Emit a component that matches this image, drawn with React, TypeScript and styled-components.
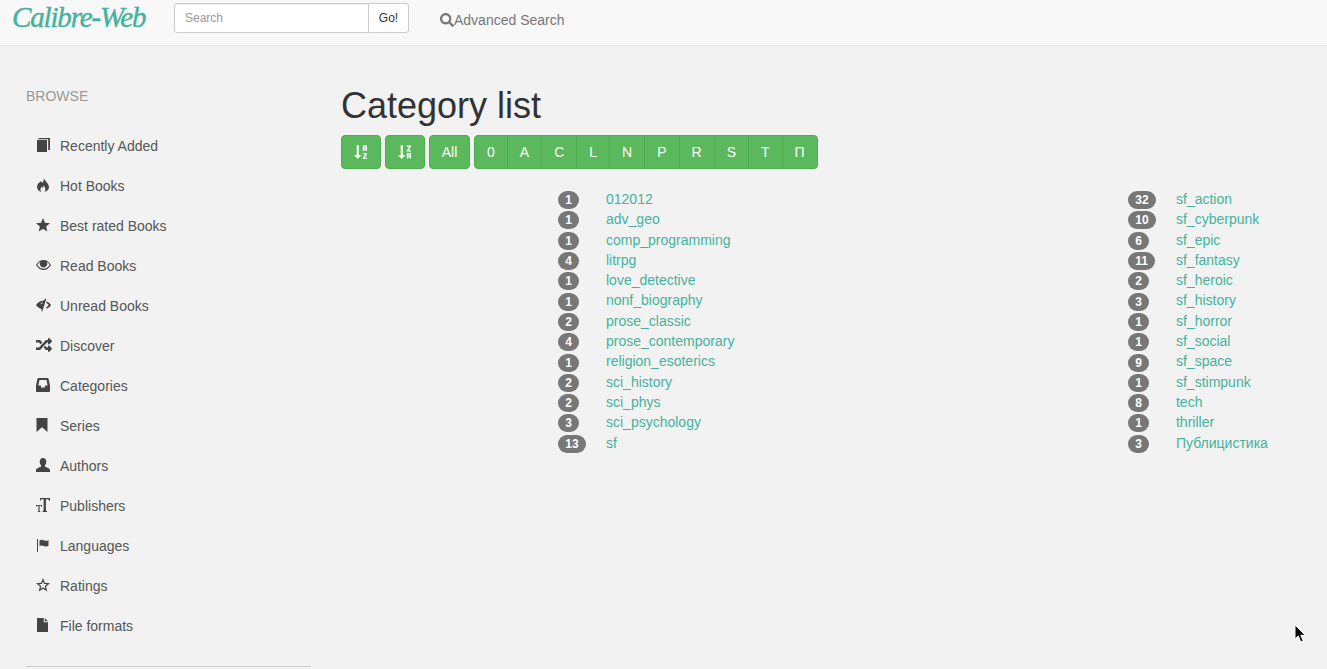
import React from 'react';
import styled, { createGlobalStyle } from 'styled-components';
import { FaRandom, FaSearch } from 'react-icons/fa';

const GlobalStyle = createGlobalStyle`
  html, body {
    margin: 0;
    height: 100%;
    overflow: hidden;
  }
  body {
    background: #f2f2f2;
    color: #333;
    font-family: "Liberation Sans", Arial, sans-serif;
    font-size: 14px;
    line-height: 20px;
  }
  * { box-sizing: border-box; }
`;

const BookIcon = () => (
  <svg width="14" height="14" viewBox="0 0 14 14" fill="currentColor">
    <path d="M1 2h10v12H1z" />
    <path d="M2.500 0H14v12h-1.800V1.300H2.500z" />
  </svg>
);

const FireIcon = () => (
  <svg width="14" height="14" viewBox="0 0 14 14" fill="currentColor">
    <path d="M7.500 0c.8 2.200-.3 3.700-1.300 4.900-.6-.5-.9-1.200-.9-2C2.800 4.300 1 6.300 1 9c0 2.600 2 4.500 4.500 5-.9-.9-1.200-1.900-1-3 .2-1 .8-1.800 1.300-2.600.3.900.7 1.500 1.300 1.700-.1-1.100.1-2 .8-2.800.2 1.400 1.500 2.500 1.500 4.200 0 1-.4 1.900-1.200 2.500C10.900 13.500 13 11.500 13 9 13 6 10 4 7.500 0z" />
  </svg>
);

const StarIcon = () => (
  <svg width="14" height="14" viewBox="0 0 14 14" fill="currentColor">
    <path d="M7 0l1.900 4.800 5.100.4-3.900 3.300 1.200 5L7 10.800l-4.300 2.700 1.200-5L0 5.200l5.100-.4z" />
  </svg>
);

const StarEmptyIcon = () => (
  <svg width="14" height="14" viewBox="0 0 14 14" fill="currentColor">
    <path
      fillRule="evenodd"
      d="M7 0l1.900 4.800 5.100.4-3.900 3.300 1.200 5L7 10.800l-4.300 2.700 1.200-5L0 5.200l5.100-.4zM7 3.200 5.900 5.900l-2.900.2 2.200 1.900-.7 2.800L7 9.300l2.500 1.500-.7-2.800L11 6.100l-2.900-.2z"
    />
  </svg>
);

const EyeOpenIcon = () => (
  <svg width="15" height="14" viewBox="0 0 15 14" fill="currentColor">
    <path
      fillRule="evenodd"
      d="M7.500 2c3 0 5.700 1.900 7.500 5-1.800 3.100-4.500 5-7.500 5S1.800 10.100 0 7c1.800-3.100 4.500-5 7.500-5zM4.400 3.700C3.100 4.400 2.100 5.500 1.300 7c1.500 2.400 3.700 3.800 6.200 3.800s4.700-1.400 6.200-3.800c-.8-1.500-1.800-2.600-3.100-3.300.4.600.7 1.300.7 2.100 0 2-1.700 3.700-3.800 3.700S3.700 7.800 3.700 5.800c0-.8.300-1.500.7-2.100z"
    />
    <path d="M6 3.500a1.300 1.300 0 0 1 1.300 1.300A1.300 1.300 0 0 1 6 6.100 3 3 0 0 0 9.500 5.600 3 3 0 0 0 6 3.500z" />
  </svg>
);

const EyeCloseIcon = () => (
  <svg width="15" height="14" viewBox="0 0 15 14" fill="currentColor">
    <path
      fillRule="evenodd"
      d="M9.200.5l1 .6L6.300 13.500l-1-.5.500-1.700C3.400 10.500 1.300 9 0 7c1.700-2.600 4.500-4.300 7.800-4.500zM6.700 4.200C5.600 4.500 4.800 5.200 4.500 6.200 5.300 5.800 6 5.600 6.400 5.600z"
    />
    <path d="M10.800 3.500l1.100.4C13.100 4.600 14.200 5.700 15 7c-1 1.600-2.400 2.900-4.200 3.700l-.6-1.500C11.200 8.800 12.100 8 12.700 7c-.7-.9-1.600-1.700-2.600-2.200z" />
  </svg>
);

const InboxIcon = () => (
  <svg width="14" height="14" viewBox="0 0 14 14" fill="currentColor">
    <path
      fillRule="evenodd"
      d="M2.500 0h9c.6 0 1 .4 1.100 1L14 7.500V13c0 .6-.4 1-1 1H1c-.6 0-1-.4-1-1V7.500L1.400 1c.1-.6.500-1 1.100-1zM3.500 2 2.400 7.500H5v2h4v-2h2.600L10.500 2z"
    />
  </svg>
);

const BookmarkIcon = () => (
  <svg width="12" height="14" viewBox="0 0 12 14" fill="currentColor">
    <path d="M.5 0h11v14L6 9.300.5 14z" />
  </svg>
);

const UserIcon = () => (
  <svg width="14" height="14" viewBox="0 0 14 14" fill="currentColor">
    <path d="M7 0c2 0 3.300 1.500 3.300 3.600 0 1.500-.5 2.900-1.300 3.900v1.200c1.800.8 5 1.300 5 3.500V14H0v-1.800c0-2.200 3.200-2.700 5-3.500V7.500C4.200 6.500 3.700 5.100 3.700 3.600 3.700 1.500 5 0 7 0z" />
  </svg>
);

const TextSizeIcon = () => (
  <svg width="14" height="14" viewBox="0 0 14 14" fill="currentColor">
    <path d="M4 0h10v3h-.8c-.1-1-.5-1.700-1.500-1.700H9.900v11c0 .5.400.7 1.100.7v1H6.500v-1c.7 0 1.100-.2 1.100-.7v-11H5.800c-.9 0-1.300.7-1.400 1.700H4z" />
    <path d="M0 7h6v1.700h-.6c0-.5-.3-.9-.9-.9h-.9v5.500h.7V14H1.700v-.7h.7V7.800h-.9c-.6 0-.9.400-.9.900H0z" />
  </svg>
);

const FlagIcon = () => (
  <svg width="14" height="14" viewBox="0 0 14 14" fill="currentColor">
    <path d="M1 1h1v13H1z" />
    <path d="M3.500 2.500c1.500-1.200 3-.8 4.300-.2 1.600.7 3 .8 4.700-.3v5.800c-1.700 1-3.200.9-4.700.2-1.400-.6-2.800-.9-4.300.2z" />
  </svg>
);

const FileIcon = () => (
  <svg width="14" height="14" viewBox="0 0 14 14" fill="currentColor">
    <path d="M1 0h6.700v4.300H12V14H1z" />
    <path d="M8.700 0 12 3.300H8.700z" />
  </svg>
);

const SortAlphaIcon = ({ flipped }: { flipped?: boolean }) => (
  <svg width="14" height="14" viewBox="0 0 14 14" fill="currentColor">
    <path d="M2.700 0h2.100v10h2.700L3.700 14 0 10h2.700z" />
    <path
      fillRule="evenodd"
      d="M8.800 .5h4.200v5.500h-1.500V4.200h-1.200V6H8.800zM10.300 1.700v1.300h1.200V1.700z"
      transform={flipped ? 'translate(0 7.500)' : undefined}
    />
    <path
      d="M8.800 8h4.200v1.300l-2.500 3.400H13V14H8.800v-1.300l2.500-3.400H8.800z"
      transform={flipped ? 'translate(0 -7.500)' : undefined}
    />
  </svg>
);

const CursorIcon = () => (
  <svg width="14" height="20" viewBox="0 0 14 20">
    <path
      d="M1 1v14l3.300-3 2.500 6 2.500-1-2.500-5.700h4.500z"
      fill="#000"
      stroke="#fff"
      strokeWidth="1"
    />
  </svg>
);

const navItems: { label: string; icon: React.ReactNode }[] = [
  { label: 'Recently Added', icon: <BookIcon /> },
  { label: 'Hot Books', icon: <FireIcon /> },
  { label: 'Best rated Books', icon: <StarIcon /> },
  { label: 'Read Books', icon: <EyeOpenIcon /> },
  { label: 'Unread Books', icon: <EyeCloseIcon /> },
  { label: 'Discover', icon: <FaRandom size={16} /> },
  { label: 'Categories', icon: <InboxIcon /> },
  { label: 'Series', icon: <BookmarkIcon /> },
  { label: 'Authors', icon: <UserIcon /> },
  { label: 'Publishers', icon: <TextSizeIcon /> },
  { label: 'Languages', icon: <FlagIcon /> },
  { label: 'Ratings', icon: <StarEmptyIcon /> },
  { label: 'File formats', icon: <FileIcon /> },
];

const letters = ['0', 'A', 'C', 'L', 'N', 'P', 'R', 'S', 'T', 'П'];

type Category = [number, string];

const leftColumn: Category[] = [
  [1, '012012'],
  [1, 'adv_geo'],
  [1, 'comp_programming'],
  [4, 'litrpg'],
  [1, 'love_detective'],
  [1, 'nonf_biography'],
  [2, 'prose_classic'],
  [4, 'prose_contemporary'],
  [1, 'religion_esoterics'],
  [2, 'sci_history'],
  [2, 'sci_phys'],
  [3, 'sci_psychology'],
  [13, 'sf'],
];

const rightColumn: Category[] = [
  [32, 'sf_action'],
  [10, 'sf_cyberpunk'],
  [6, 'sf_epic'],
  [11, 'sf_fantasy'],
  [2, 'sf_heroic'],
  [3, 'sf_history'],
  [1, 'sf_horror'],
  [1, 'sf_social'],
  [9, 'sf_space'],
  [1, 'sf_stimpunk'],
  [8, 'tech'],
  [1, 'thriller'],
  [3, 'Публицистика'],
];

const App = () => (
  <>
    <GlobalStyle />
    <Navbar>
      <Logo>Calibre-Web</Logo>
      <SearchForm>
        <SearchInput placeholder="Search" />
        <GoButton>Go!</GoButton>
      </SearchForm>
      <AdvancedLink>
        <FaSearch size={14} />
        Advanced Search
      </AdvancedLink>
    </Navbar>
    <Page>
      <Sidebar>
        <SidebarHeading>BROWSE</SidebarHeading>
        <NavList>
          {navItems.map(item => (
            <NavItem key={item.label}>
              <NavIcon>{item.icon}</NavIcon>
              {item.label}
            </NavItem>
          ))}
        </NavList>
        <Divider />
      </Sidebar>
      <Main>
        <Title>Category list</Title>
        <Filters>
          <GreenButton>
            <SortAlphaIcon />
          </GreenButton>
          <GreenButton>
            <SortAlphaIcon flipped />
          </GreenButton>
          <AllButton>All</AllButton>
          <ButtonGroup>
            {letters.map(letter => (
              <GroupButton key={letter}>{letter}</GroupButton>
            ))}
          </ButtonGroup>
        </Filters>
        <Columns>
          {[leftColumn, rightColumn].map((column, index) => (
            <div key={index}>
              {column.map(([count, name]) => (
                <Row key={name}>
                  <BadgeCell>
                    <Badge>{count}</Badge>
                  </BadgeCell>
                  <CategoryLink>{name}</CategoryLink>
                </Row>
              ))}
            </div>
          ))}
        </Columns>
      </Main>
    </Page>
    <Cursor>
      <CursorIcon />
    </Cursor>
  </>
);

const Navbar = styled.header`
  display: flex;
  align-items: flex-start;
  height: 46px;
  background: #f8f8f8;
  border-bottom: 1px solid #e7e7e7;
`;

const Logo = styled.div`
  flex: none;
  width: 174px;
  padding-left: 12px;
  color: #45b29d;
  font-family: "Liberation Serif", serif;
  font-style: italic;
  font-size: 29px;
  line-height: 35px;
  letter-spacing: -1.15px;
  white-space: nowrap;
  -webkit-text-stroke: 0.4px #45b29d;
`;

const SearchForm = styled.div`
  display: flex;
  width: 235px;
  margin-top: 3px;
`;

const SearchInput = styled.input`
  width: 195px;
  height: 30px;
  padding: 5px 10px;
  border: 1px solid #ccc;
  border-radius: 3px 0 0 3px;
  background: #fff;
  font-family: inherit;
  font-size: 12px;
  box-shadow: inset 0 1px 1px rgba(0, 0, 0, 0.075);
  outline: none;

  &::placeholder {
    color: #999;
    opacity: 1;
  }
`;

const GoButton = styled.button`
  width: 41px;
  height: 30px;
  margin-left: -1px;
  padding: 0;
  border: 1px solid #ccc;
  border-radius: 0 3px 3px 0;
  background: #fff;
  color: #333;
  font-family: inherit;
  font-size: 12px;
`;

const AdvancedLink = styled.a`
  display: flex;
  align-items: center;
  margin: 10px 0 0 31px;
  color: #777;
  line-height: 20px;

  svg {
    flex: none;
  }
`;

const Page = styled.div`
  display: flex;
  align-items: flex-start;
`;

const Sidebar = styled.aside`
  flex: none;
  width: 285px;
  margin-left: 26px;
  padding-top: 40px;
`;

const SidebarHeading = styled.div`
  height: 20px;
  color: #999;
  line-height: 20px;
`;

const NavList = styled.nav`
  margin-top: 20px;
`;

const NavItem = styled.a`
  display: flex;
  align-items: center;
  height: 40px;
  padding-left: 10px;
  color: #555;
`;

const NavIcon = styled.span`
  display: flex;
  flex: none;
  justify-content: flex-start;
  width: 24px;
  margin-top: -3px;
  color: #444;
`;

const Divider = styled.hr`
  margin: 20px 0 0;
  border: 0;
  border-top: 1px solid #ccc;
`;

const Main = styled.main`
  flex: 1;
  min-width: 0;
  margin-left: 30px;
  padding-top: 40px;
`;

const Title = styled.h1`
  margin: 0 0 9.25px;
  color: #333;
  font-size: 36px;
  font-weight: 500;
  line-height: 39.6px;
`;

const Filters = styled.div`
  display: flex;
  gap: 4px;
`;

const GreenButton = styled.button`
  display: flex;
  align-items: center;
  justify-content: center;
  height: 34px;
  padding: 0 12px;
  border: 1px solid #4cae4c;
  border-radius: 4px;
  background: #5cb85c;
  color: #fff;
  font-family: inherit;
  font-size: 14px;
`;

const AllButton = styled(GreenButton)`
  width: 41px;
  padding: 0;
`;

const ButtonGroup = styled.div`
  display: flex;
`;

const GroupButton = styled(GreenButton)`
  margin-left: -1px;
  border-radius: 0;

  &:first-child {
    margin-left: 0;
    border-radius: 4px 0 0 4px;
  }

  &:last-child {
    border-radius: 0 4px 4px 0;
  }
`;

const Columns = styled.div`
  display: grid;
  grid-template-columns: 570px 1fr;
  margin: 20px 0 0 217px;
`;

const Row = styled.div`
  display: flex;
  align-items: center;
  height: 20.3px;
`;

const BadgeCell = styled.div`
  flex: none;
  width: 47.7px;
  margin-left: 0.3px;
`;

const Badge = styled.span`
  display: inline-block;
  min-width: 10px;
  padding: 3px 7px;
  border-radius: 10px;
  background: #777;
  color: #fff;
  font-size: 12px;
  font-weight: 700;
  line-height: 12px;
  vertical-align: middle;
`;

const CategoryLink = styled.a`
  color: #45b29d;
`;

const Cursor = styled.div`
  position: absolute;
  top: 624px;
  left: 1294px;
  display: flex;
`;

export default App;
